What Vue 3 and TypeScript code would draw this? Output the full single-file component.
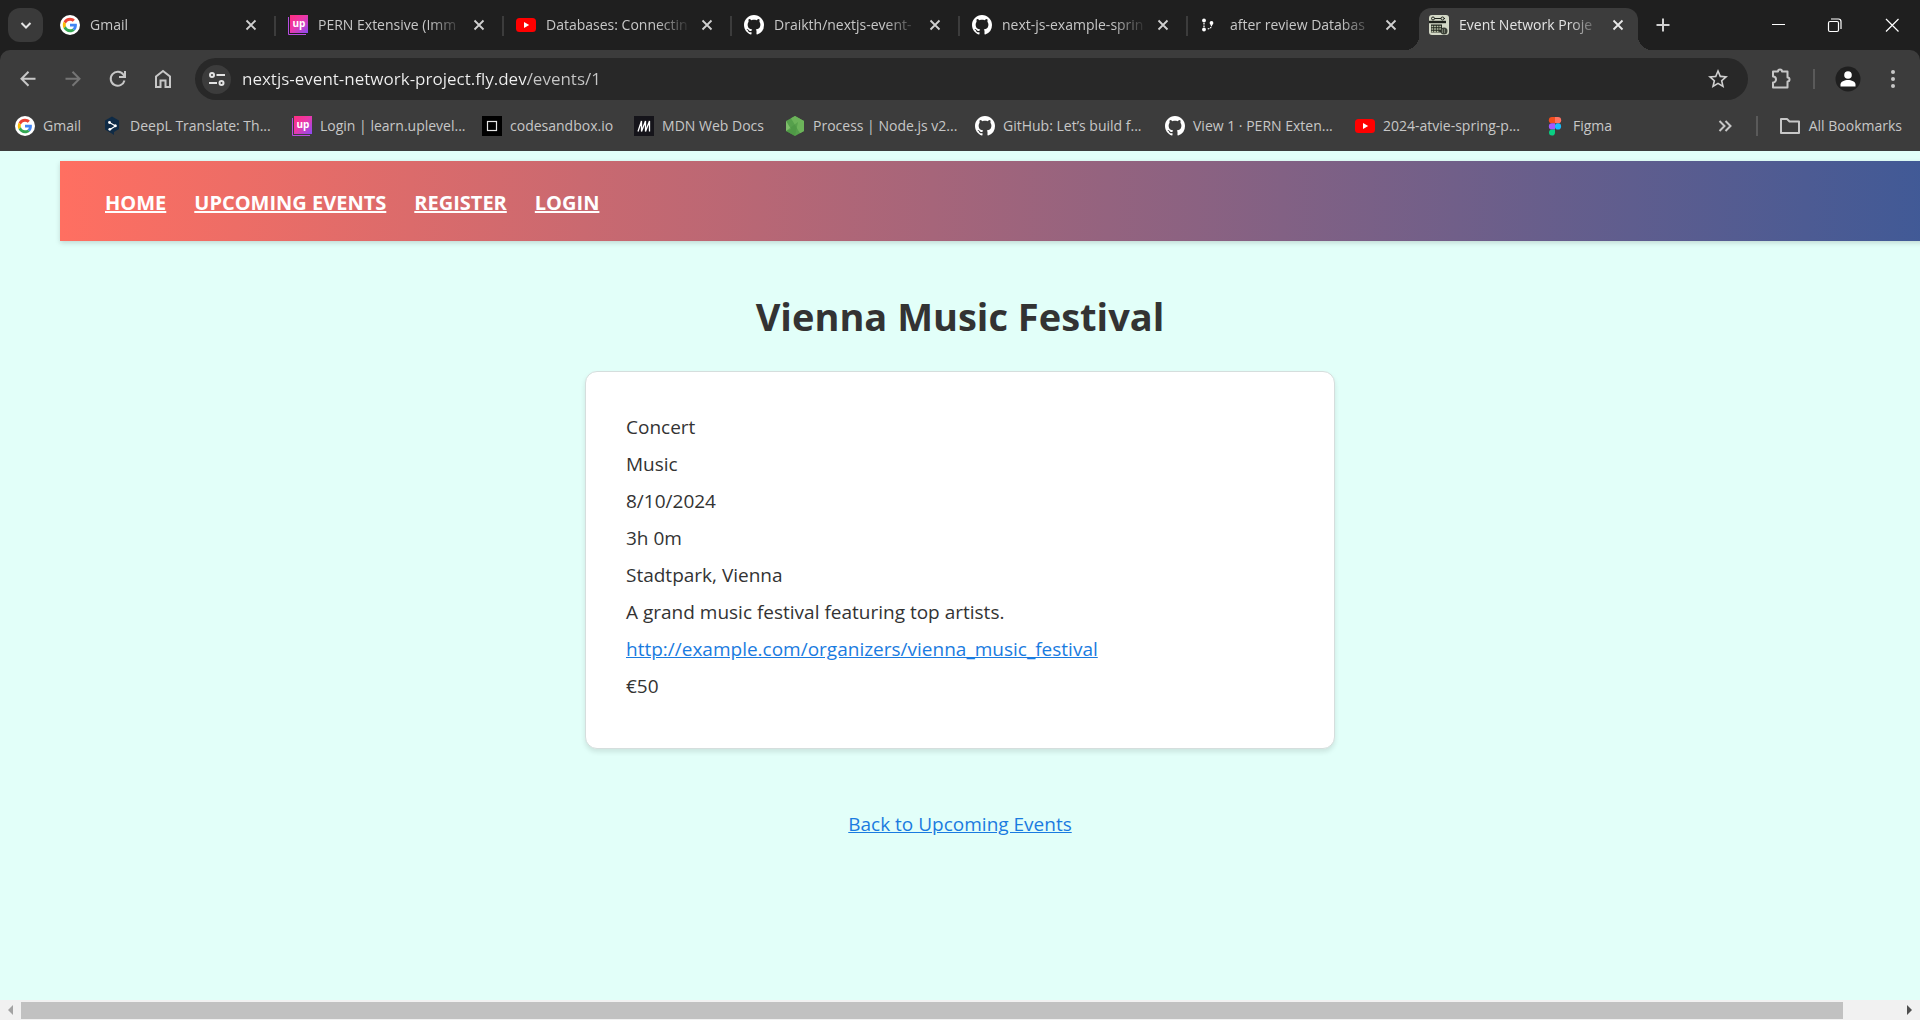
<script setup lang="ts">
interface Tab {
  icon: string
  title: string
  active?: boolean
}

interface Bookmark {
  icon: string
  label: string
  clipped?: boolean
}

const tabs: Tab[] = [
  { icon: 'google', title: 'Gmail' },
  { icon: 'uplevel', title: 'PERN Extensive (Imm' },
  { icon: 'youtube', title: 'Databases: Connectin' },
  { icon: 'github', title: 'Draikth/nextjs-event-' },
  { icon: 'github', title: 'next-js-example-sprin' },
  { icon: 'branch', title: 'after review Databas' },
  { icon: 'calendar', title: 'Event Network Proje', active: true },
]

const bookmarks: Bookmark[] = [
  { icon: 'google', label: 'Gmail' },
  { icon: 'deepl', label: 'DeepL Translate: Th...', clipped: true },
  { icon: 'uplevel', label: 'Login | learn.uplevel...', clipped: true },
  { icon: 'codesandbox', label: 'codesandbox.io' },
  { icon: 'mdn', label: 'MDN Web Docs' },
  { icon: 'node', label: 'Process | Node.js v2...', clipped: true },
  { icon: 'github', label: 'GitHub: Let’s build f...', clipped: true },
  { icon: 'github', label: 'View 1 · PERN Exten...', clipped: true },
  { icon: 'youtube', label: '2024-atvie-spring-p...', clipped: true },
  { icon: 'figma', label: 'Figma' },
]

const navLinks: string[] = ['HOME', 'UPCOMING EVENTS', 'REGISTER', 'LOGIN']

const event = {
  name: 'Vienna Music Festival',
  type: 'Concert',
  category: 'Music',
  date: '8/10/2024',
  duration: '3h 0m',
  location: 'Stadtpark, Vienna',
  description: 'A grand music festival featuring top artists.',
  organizerUrl: 'http://example.com/organizers/vienna_music_festival',
  price: '€50',
}
</script>

<template>
  <div class="window">
    <svg class="sprite" width="0" height="0" aria-hidden="true">
      <defs>
        <linearGradient id="up-fill" x1="0" y1="0" x2="1" y2="1">
          <stop offset="0" stop-color="#ff2e7e" />
          <stop offset="0.45" stop-color="#ec38a8" />
          <stop offset="1" stop-color="#8a4bf5" />
        </linearGradient>
      </defs>
      <symbol id="google" viewBox="0 0 20 20">
        <circle cx="10" cy="10" r="10" fill="#fff" />
        <g transform="translate(2.8 2.8) scale(0.3)">
          <path fill="#ea4335" d="M24 9.5c3.54 0 6.71 1.22 9.21 3.6l6.85-6.85C35.9 2.38 30.47 0 24 0 14.62 0 6.51 5.38 2.56 13.22l7.98 6.19C12.43 13.72 17.74 9.5 24 9.5z" />
          <path fill="#4285f4" d="M46.98 24.55c0-1.57-.15-3.09-.38-4.55H24v9.02h12.94c-.58 2.96-2.26 5.48-4.78 7.18l7.73 6c4.51-4.18 7.09-10.36 7.09-17.65z" />
          <path fill="#fbbc05" d="M10.53 28.59c-.48-1.45-.76-2.99-.76-4.59s.27-3.14.76-4.59l-7.98-6.19C.92 16.46 0 20.12 0 24c0 3.88.92 7.54 2.56 10.78l7.97-6.19z" />
          <path fill="#34a853" d="M24 48c6.48 0 11.93-2.13 15.89-5.81l-7.73-6c-2.15 1.45-4.92 2.3-8.16 2.3-6.26 0-11.57-4.22-13.47-9.91l-7.98 6.19C6.51 42.62 14.62 48 24 48z" />
        </g>
      </symbol>
      <symbol id="uplevel" viewBox="0 0 20 20">
        <path d="M0.5 2v17.5H18" fill="none" stroke="#b84be0" />
        <rect x="2" y="0" width="18" height="18" fill="url(#up-fill)" />
        <text x="11" y="12" text-anchor="middle" font-family="Open Sans, sans-serif" font-size="10" font-weight="700" fill="#fff">up</text>
      </symbol>
      <symbol id="youtube" viewBox="0 0 20 20">
        <rect x="0" y="3" width="20" height="14" rx="3.5" fill="#f00" />
        <path d="M8 7l5.2 3L8 13z" fill="#fff" />
      </symbol>
      <symbol id="github" viewBox="0 0 16 16">
        <path fill="#fff" d="M8 0C3.58 0 0 3.58 0 8c0 3.54 2.29 6.53 5.47 7.59.4.07.55-.17.55-.38 0-.19-.01-.82-.01-1.49-2.01.37-2.53-.49-2.69-.94-.09-.23-.48-.94-.82-1.13-.28-.15-.68-.52-.01-.53.63-.01 1.08.58 1.23.82.72 1.21 1.87.87 2.33.66.07-.52.28-.87.51-1.07-1.78-.2-3.64-.89-3.64-3.95 0-.87.31-1.59.82-2.15-.08-.2-.36-1.02.08-2.12 0 0 .67-.21 2.2.82.64-.18 1.32-.27 2-.27s1.36.09 2 .27c1.53-1.04 2.2-.82 2.2-.82.44 1.1.16 1.92.08 2.12.51.56.82 1.27.82 2.15 0 3.07-1.87 3.75-3.65 3.95.29.25.54.73.54 1.48 0 1.07-.01 1.93-.01 2.2 0 .21.15.46.55.38A8.01 8.01 0 0 0 16 8c0-4.42-3.58-8-8-8z" />
      </symbol>
      <symbol id="branch" viewBox="0 0 20 20">
        <g fill="#fff">
          <circle cx="4" cy="5.5" r="1.9" />
          <circle cx="4" cy="14.5" r="1.9" />
          <circle cx="11.5" cy="8" r="1.9" />
        </g>
        <path d="M4 8v5M11.5 9.5c0 3-1 4-4 4.5" fill="none" stroke="#fff" stroke-width="1.3" stroke-dasharray="1.5 1" />
      </symbol>
      <symbol id="calendar" viewBox="0 0 20 20">
        <rect x="0" y="0" width="20" height="20" rx="3" fill="#d3d8c6" />
        <path d="M0 7h17" stroke="#1d211b" stroke-width="2.4" />
        <path d="M3 3.5h13" stroke="#1d211b" stroke-width="1" />
        <circle cx="4" cy="3.5" r="1.500" fill="#d3d8c6" stroke="#1d211b" />
        <circle cx="13.500" cy="3.5" r="1.500" fill="#d3d8c6" stroke="#1d211b" />
        <rect x="2" y="9.500" width="11" height="8" fill="#20251d" />
        <path d="M2.500 11.500h10M2.500 14h10M2.500 16.500h8" stroke="#b9c2a8" stroke-width="1.400" stroke-dasharray="1.800 0.800" />
        <circle cx="15" cy="16" r="3.500" fill="#3b4037" />
        <path d="M13 15h4M13 17h4" stroke="#aeb5a2" stroke-dasharray="1 1" />
      </symbol>
      <symbol id="deepl" viewBox="0 0 20 20">
        <path d="M10 0.500l7 4v8.500l-5 3v3l-3-2-6-3.500v-9z" fill="#0f2b46" />
        <path d="M7.500 6.500l6 3.500-5.500 3.500" fill="none" stroke="#fff" stroke-width="1.100" />
        <g fill="#fff">
          <circle cx="7.500" cy="6.500" r="1.400" />
          <circle cx="13.300" cy="9.800" r="1.500" />
          <circle cx="7.800" cy="13.300" r="1.400" />
        </g>
      </symbol>
      <symbol id="codesandbox" viewBox="0 0 20 20">
        <rect width="20" height="20" fill="#000" />
        <rect x="5.500" y="5.500" width="9" height="9" fill="none" stroke="#e6e6e6" stroke-width="1.200" />
      </symbol>
      <symbol id="mdn" viewBox="0 0 20 20">
        <rect width="20" height="20" fill="#15141a" />
        <path d="M4 15.500L7.500 5v10.500L11.500 5v10.500L15.500 5v10.500" fill="none" stroke="#fff" stroke-width="1.300" stroke-linejoin="bevel" />
      </symbol>
      <symbol id="node" viewBox="0 0 20 20">
        <path d="M10 0l9 5v10l-9 5-9-5V5z" fill="#56a04c" />
        <path d="M10 0l9 5v10l-4 2.200L6 2.200z" fill="#6cb35a" />
        <path d="M1 5l5 8-5 2z" fill="#7fbf6b" />
        <path d="M10 20l-9-5 12-9z" fill="#4b9443" opacity="0.600" />
      </symbol>
      <symbol id="figma" viewBox="0 0 20 20">
        <path d="M10 1H7a3 3 0 0 0 0 6.300h3z" fill="#f24e1e" />
        <path d="M10 1h3a3 3 0 0 1 0 6.300h-3z" fill="#ff7262" />
        <path d="M10 7.300H7a3 3 0 0 0 0 6.300h3z" fill="#a259ff" />
        <circle cx="13" cy="10.400" r="3.100" fill="#1abcfe" />
        <path d="M10 13.600H7a3 3 0 1 0 3 3.200z" fill="#0acf83" />
      </symbol>
    </svg>

    <header class="browser">
      <div class="tab-strip">
        <button class="tab-search" aria-label="Search tabs">
          <svg width="20" height="20" viewBox="0 0 20 20"><path d="M5.500 8l4.500 4.500L14.500 8" fill="none" stroke="#e3e3e3" stroke-width="2" /></svg>
        </button>
        <div class="tabs">
          <div v-for="tab in tabs" :key="tab.title" class="tab" :class="{ active: tab.active }">
            <svg class="favicon" width="20" height="20"><use :href="'#' + tab.icon" /></svg>
            <button class="tab-title">{{ tab.title }}</button>
            <button class="tab-close" aria-label="Close tab">
              <svg width="20" height="20" viewBox="0 0 20 20"><path d="M5.500 5.500l9 9M14.500 5.500l-9 9" stroke="currentColor" stroke-width="1.800" /></svg>
            </button>
          </div>
        </div>
        <button class="new-tab" aria-label="New tab">
          <svg width="20" height="20" viewBox="0 0 20 20"><path d="M10 3.500v13M3.500 10h13" stroke="#d0d0d0" stroke-width="2" /></svg>
        </button>
        <div class="window-controls">
          <button aria-label="Minimize">
            <svg width="20" height="20" viewBox="0 0 20 20"><path d="M4 9.500h13" stroke="#fff" /></svg>
          </button>
          <button aria-label="Restore">
            <svg width="20" height="20" viewBox="0 0 20 20" fill="none" stroke="#fff" stroke-width="1.200">
              <rect x="3.500" y="6.500" width="10" height="10" rx="1.500" />
              <path d="M6 4h7.500a2.500 2.500 0 0 1 2.500 2.500V14" />
            </svg>
          </button>
          <button aria-label="Close window">
            <svg width="20" height="20" viewBox="0 0 20 20"><path d="M4 4l12.500 12.500M16.500 4L4 16.500" stroke="#fff" stroke-width="1.200" /></svg>
          </button>
        </div>
      </div>

      <div class="toolbar">
        <button class="tool" aria-label="Back">
          <svg width="24" height="24" viewBox="0 0 24 24"><path d="M19.500 11.800H5.800M12.500 4.800l-7 7 7 7" fill="none" stroke="#c7c7c7" stroke-width="2" /></svg>
        </button>
        <button class="tool" aria-label="Forward" disabled>
          <svg width="24" height="24" viewBox="0 0 24 24"><path d="M4.500 11.800h13.700M11.500 4.800l7 7-7 7" fill="none" stroke="#757575" stroke-width="2" /></svg>
        </button>
        <button class="tool" aria-label="Reload">
          <svg width="24" height="24" viewBox="0 0 24 24" fill="none" stroke="#c7c7c7" stroke-width="2">
            <path d="M18.500 13.500A7 7 0 1 1 17.500 7.800L19 9.500" />
            <path d="M19 4v6h-6" />
          </svg>
        </button>
        <button class="tool" aria-label="Home">
          <svg width="24" height="24" viewBox="0 0 24 24"><path d="M5 9.500L12 4l7 5.500V20h-4.500v-6.500h-5V20H5z" fill="none" stroke="#c7c7c7" stroke-width="2" /></svg>
        </button>
        <div class="omnibox">
          <button class="site-info" aria-label="View site information">
            <svg width="18" height="18" viewBox="0 0 18 18" fill="none" stroke="#e3e3e3" stroke-width="2">
              <circle cx="4" cy="5" r="2" />
              <path d="M8.500 5H17M1 13h8" />
              <circle cx="13.500" cy="13" r="2" />
            </svg>
          </button>
          <input class="url" type="text" aria-label="Address" value="nextjs-event-network-project.fly.dev/events/1" />
          <button class="star" aria-label="Bookmark this page">
            <svg width="24" height="24" viewBox="0 0 24 24"><path fill="#d0d0d0" d="M22 9.240l-7.190-.62L12 2 9.190 8.630 2 9.240l5.460 4.730L5.820 21 12 17.270 18.180 21l-1.630-7.030L22 9.240zM12 15.400l-3.760 2.270 1-4.280-3.320-2.880 4.380-.38L12 6.100l1.710 4.040 4.380.38-3.320 2.880 1 4.280L12 15.400z" /></svg>
          </button>
        </div>
        <button class="tool extensions" aria-label="Extensions">
          <svg width="24" height="24" viewBox="0 0 24 24"><path d="M4 4.500h5a2 2 0 0 1 4 0h5.500v6a2 2 0 0 1 0 4v6H4v-5a3 3 0 0 0 0-6z" fill="none" stroke="#c7c7c7" stroke-width="2" stroke-linejoin="round" /></svg>
        </button>
        <span class="divider"></span>
        <button class="tool" aria-label="Profile">
          <svg width="26" height="26" viewBox="0 0 26 26">
            <circle cx="13" cy="13" r="12.500" fill="#1f1f1f" />
            <circle cx="13" cy="9" r="3.800" fill="#fff" />
            <path d="M5.500 20.500v-2c0-3 4-4.500 7.500-4.500s7.500 1.500 7.500 4.500v2z" fill="#fff" />
          </svg>
        </button>
        <button class="tool" aria-label="Menu">
          <svg width="20" height="20" viewBox="0 0 20 20" fill="#c7c7c7">
            <circle cx="10" cy="3" r="2" />
            <circle cx="10" cy="10" r="2" />
            <circle cx="10" cy="17" r="2" />
          </svg>
        </button>
      </div>

      <nav class="bookmarks" aria-label="Bookmarks">
        <a v-for="bookmark in bookmarks" :key="bookmark.label" href="#" class="bookmark" :class="{ clipped: bookmark.clipped }">
          <svg width="20" height="20"><use :href="'#' + bookmark.icon" /></svg>
          <span>{{ bookmark.label }}</span>
        </a>
        <button class="more" aria-label="More bookmarks">
          <svg width="20" height="20" viewBox="0 0 20 20"><path d="M4.500 5l5 5-5 5M10.500 5l5 5-5 5" fill="none" stroke="#c7c7c7" stroke-width="2" /></svg>
        </button>
        <span class="divider"></span>
        <button class="bookmark all">
          <svg width="22" height="20" viewBox="0 0 22 20"><path d="M2 3h6l2.500 2.500H20V17H2z" fill="none" stroke="#c7c7c7" stroke-width="2" stroke-linejoin="round" /></svg>
          <span>All Bookmarks</span>
        </button>
      </nav>
    </header>

    <div class="page">
      <nav class="site-nav">
        <a v-for="link in navLinks" :key="link" href="#">{{ link }}</a>
      </nav>
      <main>
        <h1>{{ event.name }}</h1>
        <section class="card">
          <p>{{ event.type }}</p>
          <p>{{ event.category }}</p>
          <p>{{ event.date }}</p>
          <p>{{ event.duration }}</p>
          <p>{{ event.location }}</p>
          <p>{{ event.description }}</p>
          <p><a href="#">{{ event.organizerUrl }}</a></p>
          <p>{{ event.price }}</p>
        </section>
        <a class="back" href="#">Back to Upcoming Events</a>
      </main>
    </div>

    <div class="scrollbar">
      <button aria-label="Scroll left">
        <svg width="21" height="18" viewBox="0 0 21 18"><path d="M13 4v10L8 9z" fill="#a3a3a3" /></svg>
      </button>
      <div class="track"><div class="thumb"></div></div>
      <button aria-label="Scroll right">
        <svg width="21" height="18" viewBox="0 0 21 18"><path d="M8 4v10l5-5z" fill="#505050" /></svg>
      </button>
    </div>
  </div>
</template>

<style>
body {
  background: #e2fff9;
}
</style>

<style scoped>
.window {
  display: flex;
  flex-direction: column;
  min-height: 100vh;
  overflow: hidden;
  background: #e2fff9;
  color: #333;
  font-family: "Open Sans", "Noto Sans", sans-serif;
}

.sprite {
  position: absolute;
}

button {
  margin: 0;
  padding: 0;
  border: 0;
  background: none;
  color: inherit;
  font: inherit;
}

svg {
  display: block;
  flex: none;
}

.browser {
  background: #1f1f1f;
  color: #c7c7c7;
  font-size: 14px;
  line-height: 20px;
}

.tab-strip {
  display: flex;
  align-items: center;
  height: 50px;
  padding-left: 8px;
}

.tab-search {
  display: grid;
  flex: none;
  place-items: center;
  width: 35px;
  height: 34px;
  margin-right: 5px;
  border-radius: 12px;
  background: #3a3a3a;
}

.tabs {
  display: flex;
  flex: 0 1 1590px;
  align-self: stretch;
  min-width: 0;
}

.tab {
  position: relative;
  display: flex;
  flex: 0 1 228px;
  align-items: center;
  gap: 10px;
  min-width: 0;
  box-sizing: border-box;
  margin-top: 8px;
  padding: 0 15px 8px 12px;
}

.tab:not(.active)::after {
  content: "";
  position: absolute;
  top: 8px;
  right: 0;
  width: 2px;
  height: 20px;
  background: #3c3c3c;
}

.tab:nth-last-child(2)::after {
  display: none;
}

.tab-title {
  flex: 1;
  min-width: 0;
  margin-right: -8px;
  overflow: hidden;
  text-align: left;
  white-space: nowrap;
  mask-image: linear-gradient(to right, #000 calc(100% - 38px), transparent calc(100% - 4px));
}

.tab-close {
  color: #d0d0d0;
}

.tab.active {
  flex-basis: 219px;
  margin-left: 3px;
  padding-left: 10px;
  padding-right: 10px;
  border-radius: 12px 12px 0 0;
  background: #3c3c3c;
  color: #e3e3e3;
}

.tab.active::before,
.tab.active::after {
  content: "";
  position: absolute;
  bottom: 0;
  width: 14px;
  height: 14px;
}

.tab.active::before {
  right: 100%;
  background: radial-gradient(circle at 0 0, transparent 14px, #3c3c3c 14px);
}

.tab.active::after {
  left: 100%;
  background: radial-gradient(circle at 100% 0, transparent 14px, #3c3c3c 14px);
}

.tab.active .tab-close {
  color: #e8e8e8;
}

.new-tab {
  margin-left: 15px;
}

.window-controls {
  display: flex;
  margin-left: auto;
}

.window-controls button {
  display: grid;
  place-items: center;
  width: 57px;
  height: 40px;
}

.toolbar {
  display: flex;
  align-items: center;
  padding: 8px 5px;
  border-radius: 10px 10px 0 0;
  background: #3c3c3c;
}

.tool {
  display: grid;
  place-items: center;
  width: 45px;
  height: 42px;
}

.omnibox {
  display: flex;
  flex: 1;
  align-items: center;
  gap: 11px;
  height: 42px;
  margin-left: 10px;
  padding: 0 18px 0 7px;
  box-sizing: border-box;
  border-radius: 21px;
  background: #282828;
}

.site-info {
  display: grid;
  place-items: center;
  width: 29px;
  height: 29px;
  border-radius: 50%;
  background: #3c3c3c;
}

.url {
  flex: 1;
  min-width: 0;
  padding: 0;
  border: 0;
  outline: 0;
  background: linear-gradient(to right, #f0f0f0 286px, #c7c7c7 286px);
  background-clip: text;
  color: transparent;
  font: inherit;
  font-size: 17px;
  line-height: 24px;
}

.extensions {
  margin: 0 10px;
}

.divider {
  width: 2px;
  height: 20px;
  background: #5a5a5a;
}

.toolbar .divider {
  margin-right: 10px;
}

.bookmarks {
  display: flex;
  align-items: center;
  gap: 21px;
  padding: 8px 18px 15px 15px;
  background: #3c3c3c;
}

.bookmark {
  display: flex;
  align-items: center;
  gap: 8px;
  color: inherit;
  text-decoration: none;
  white-space: nowrap;
}

.clipped {
  width: 169px;
}

.more {
  margin-left: auto;
}

.page {
  flex: 1;
  padding-top: 10px;
}

.site-nav {
  display: flex;
  align-items: center;
  gap: 28px;
  width: 100%;
  height: 80px;
  margin-left: 60px;
  padding: 3px 0 0 45px;
  box-sizing: border-box;
  background: linear-gradient(90deg, #ff6f61, #3b5998);
  box-shadow: 0 2px 5px rgba(0, 0, 0, 0.15);
}

.site-nav a {
  color: #fff;
  font-size: 20px;
  font-weight: 700;
}

main {
  display: flex;
  flex-direction: column;
  align-items: center;
}

h1 {
  margin: 45px 0 25px;
  font-size: 38px;
  line-height: 60px;
}

.card {
  width: 750px;
  max-width: 100%;
  padding: 40px;
  box-sizing: border-box;
  border: 1px solid #d5dedd;
  border-radius: 12px;
  background: #fff;
  box-shadow: 0 3px 5px rgba(0, 0, 0, 0.1);
}

.card p {
  margin: 0 0 7px;
}

.card p,
.back {
  font-size: 19px;
  line-height: 30px;
}

.card a,
.back {
  color: #1a7be0;
}

.back {
  margin-top: 60px;
}

.scrollbar {
  display: flex;
  align-items: center;
  height: 20px;
  background: #f1f1f1;
}

.track {
  flex: 1;
}

.thumb {
  width: 97%;
  height: 17px;
  background: #c1c1c1;
}
</style>
